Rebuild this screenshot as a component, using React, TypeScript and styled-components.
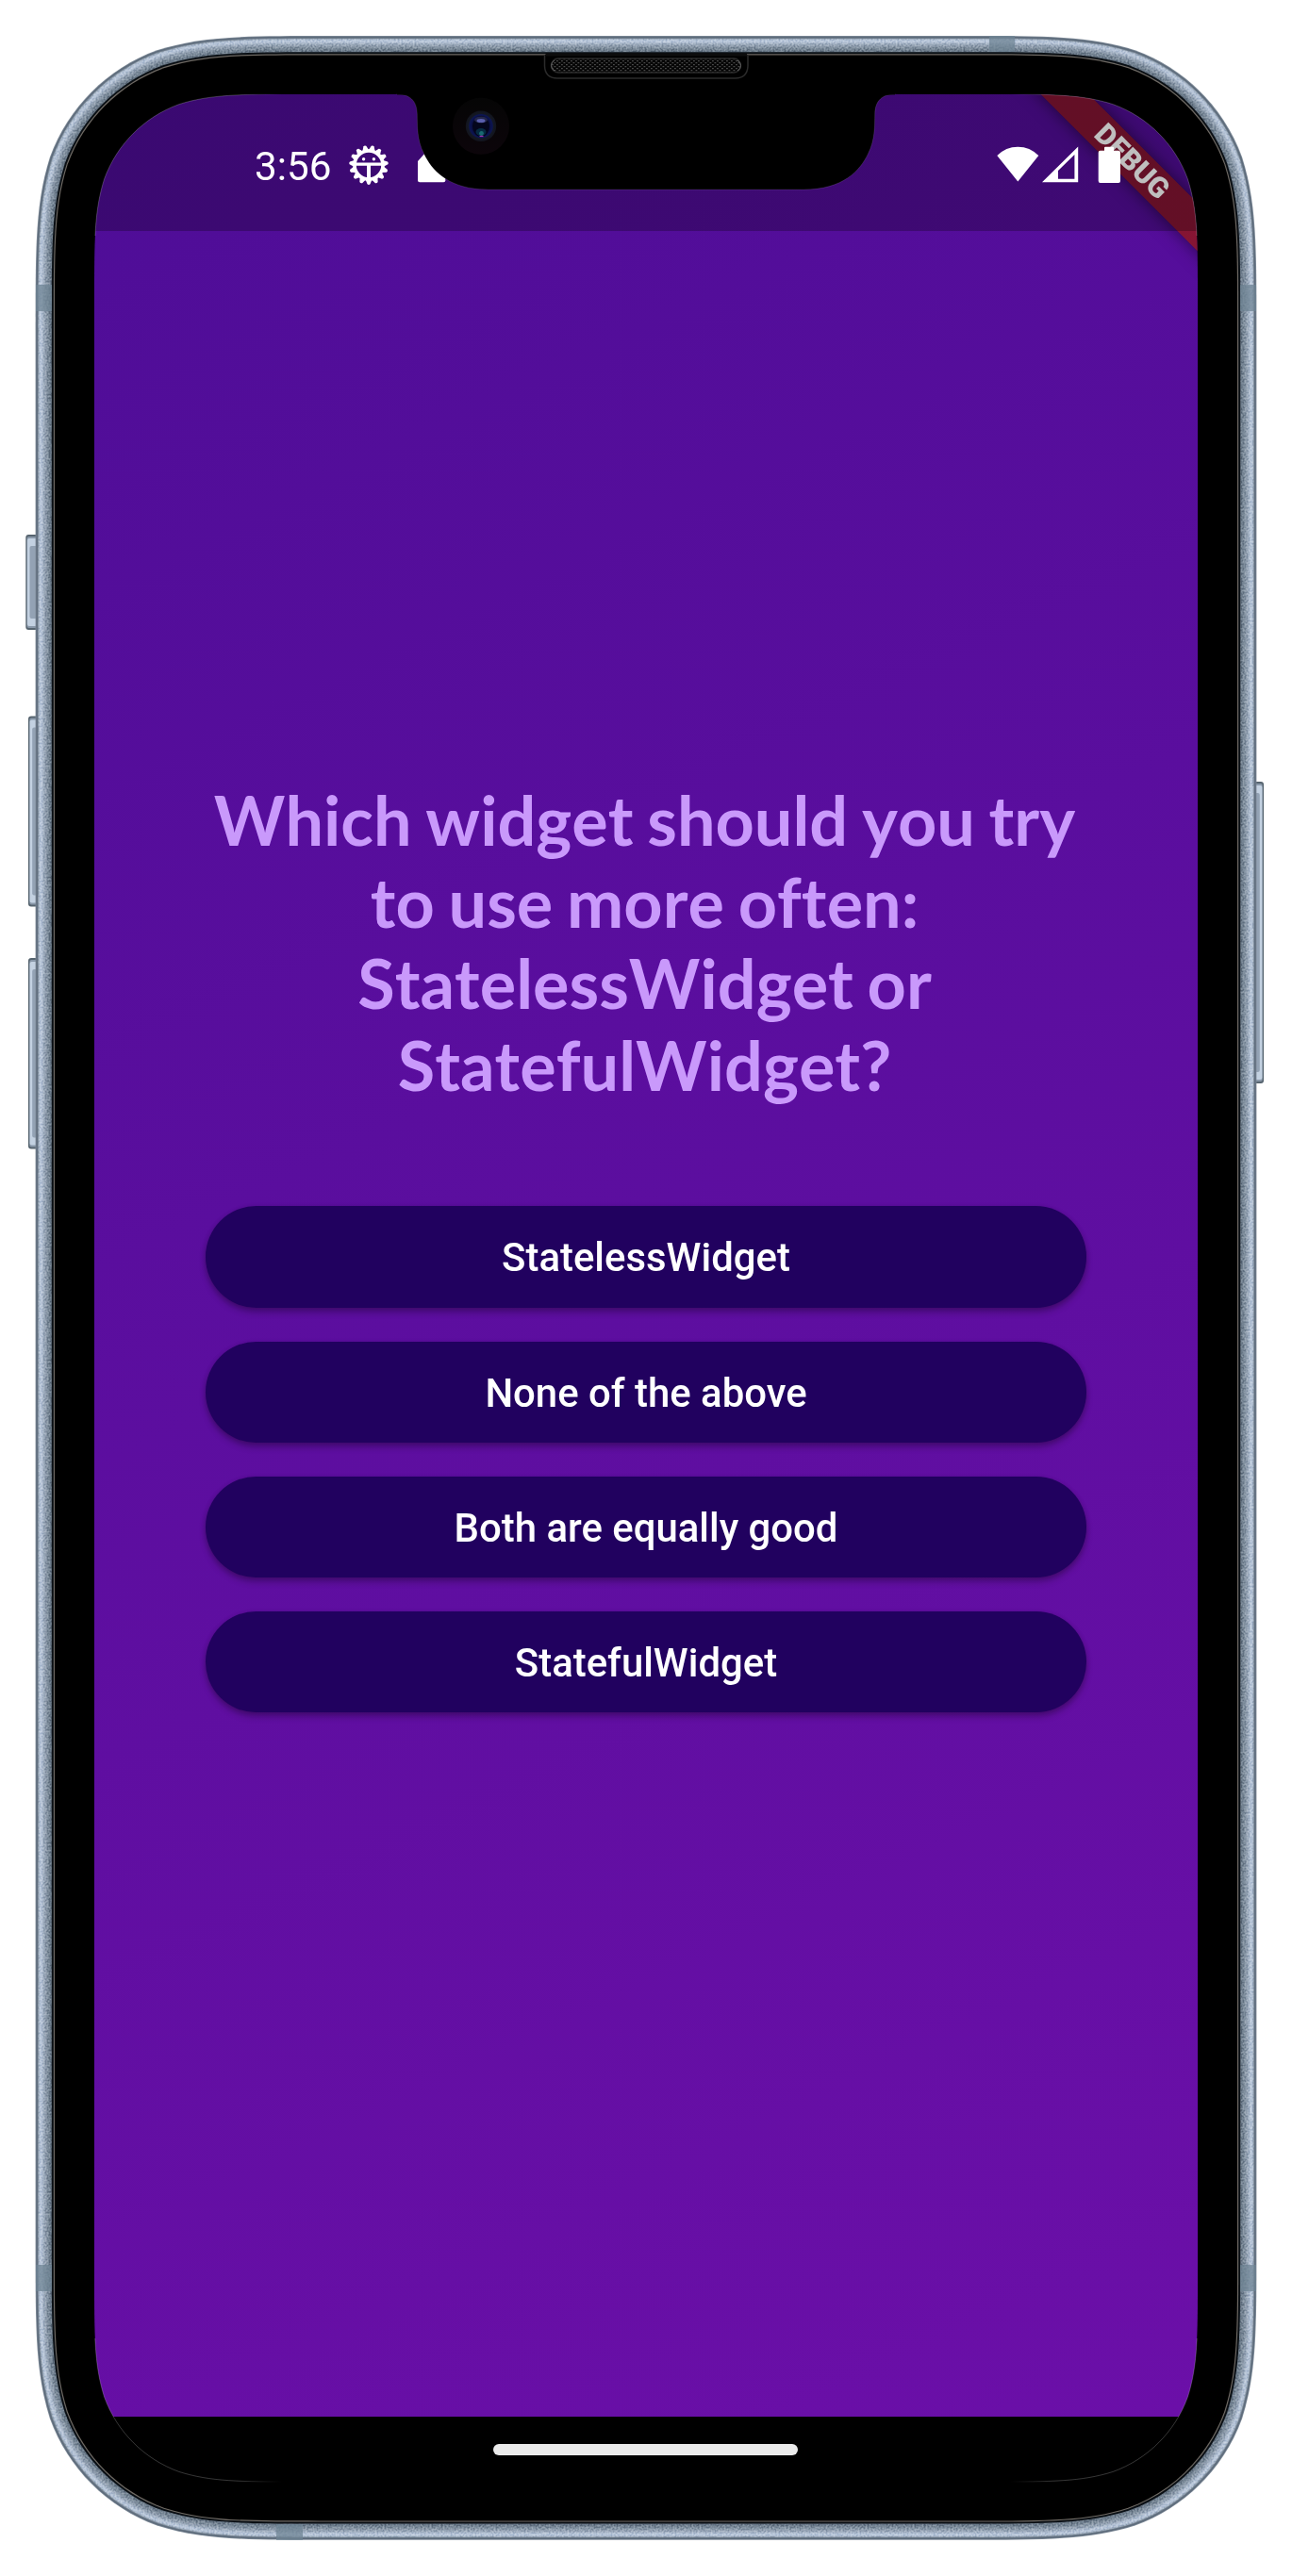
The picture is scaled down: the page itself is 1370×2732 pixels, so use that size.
import React from "react";
import styled, { createGlobalStyle } from "styled-components";

const GlobalStyle = createGlobalStyle`
  * { box-sizing: border-box; }
  body { margin: 0; background: #fff; }
`;

/* Rounded rectangle with continuous-curvature corners. */
const smoothRect = (x: number, y: number, w: number, h: number, r: number): string => {
  const a = 1.528665 * r, b = 1.088493 * r, c = 0.868407 * r;
  const d = 0.631494 * r, e = 0.074911 * r, f = 0.372824 * r, g = 0.16906 * r;
  const R = x + w, B = y + h;
  return [
    `M${x + a} ${y}L${R - a} ${y}`,
    `C${R - b} ${y} ${R - c} ${y} ${R - d} ${y + e}`,
    `C${R - f} ${y + g} ${R - g} ${y + f} ${R - e} ${y + d}`,
    `C${R} ${y + c} ${R} ${y + b} ${R} ${y + a}`,
    `L${R} ${B - a}`,
    `C${R} ${B - b} ${R} ${B - c} ${R - e} ${B - d}`,
    `C${R - g} ${B - f} ${R - f} ${B - g} ${R - d} ${B - e}`,
    `C${R - c} ${B} ${R - b} ${B} ${R - a} ${B}`,
    `L${x + a} ${B}`,
    `C${x + b} ${B} ${x + c} ${B} ${x + d} ${B - e}`,
    `C${x + f} ${B - g} ${x + g} ${B - f} ${x + e} ${B - d}`,
    `C${x} ${B - c} ${x} ${B - b} ${x} ${B - a}`,
    `L${x} ${y + a}`,
    `C${x} ${y + b} ${x} ${y + c} ${x + e} ${y + d}`,
    `C${x + g} ${y + f} ${x + f} ${y + g} ${x + d} ${y + e}`,
    `C${x + c} ${y} ${x + b} ${y} ${x + a} ${y}Z`,
  ].join("");
};

const shellPath = (inset: number): string =>
  smoothRect(37.6 + inset, 38 + inset, 1294.8 - 2 * inset, 2655.8 - 2 * inset, 204 - inset);

/* Metal rim colours, from the outer edge inwards. */
const rim: [number, string][] = [
  [0, "#7f8b98"], [0.8, "#5d6b7b"], [2.2, "#73818f"], [3, "#a3b1c2"], [4, "#b5c3d5"],
  [5, "#bccadc"], [6, "#b9c6d8"], [7, "#afbdcf"], [8, "#a4b2c3"], [9, "#9ba9ba"],
  [10, "#94a2b2"], [11, "#8d9bab"], [12, "#8594a3"], [13, "#7e8d9c"], [14, "#788796"],
  [15, "#728190"], [16, "#6a7988"], [17.2, "#0a0f14"], [19.2, "#6e6963"], [20.4, "#000"],
];

const Stage = styled.main`
  position: relative;
  width: 1370px;
  height: 2732px;
  padding: 100px;
  overflow: hidden;
`;

const Layer = styled.svg`
  position: absolute;
  inset: 0;
  width: 1370px;
  height: 2732px;
  pointer-events: none;
`;

const Grain = styled.g`
  mix-blend-mode: soft-light;
`;

const Screen = styled.section`
  position: relative;
  display: flex;
  flex-direction: column;
  width: 1170px;
  height: 2532px;
  background: #000;
  clip-path: path("${smoothRect(0, 0, 1170, 2532, 142)}");
`;

const AppArea = styled.div`
  position: relative;
  display: flex;
  flex-direction: column;
  height: 2462.7px;
  overflow: hidden;
  background: linear-gradient(154.6deg, rgb(78, 13, 151), rgb(107, 15, 168));
`;

const DebugBanner = styled.div`
  position: absolute;
  top: 51.5px;
  right: -79px;
  width: 300px;
  height: 36px;
  display: flex;
  align-items: center;
  justify-content: center;
  padding-left: 4px;
  transform: rotate(45deg);
  background:
    linear-gradient(rgba(183, 28, 28, 0.627), rgba(183, 28, 28, 0.627)),
    rgba(0, 0, 0, 0.42);
  box-shadow: 0 0 18px rgba(0, 0, 0, 0.5);
  color: #fff;
  font: 900 30.5px/36px Roboto, sans-serif;
`;

const StatusBar = styled.header`
  position: relative;
  display: flex;
  align-items: flex-start;
  height: 145px;
  padding: 50px 80px 0 170px;
  background: rgba(0, 0, 0, 0.25);
  color: #fff;
`;

const Clock = styled.span`
  width: 99.4px;
  padding-top: 2px;
  font: 400 42.2px/50px Roboto, sans-serif;
`;

const StatusGlyph = styled.svg<{ $gap?: number }>`
  flex: none;
  height: 50px;
  margin-left: ${(p) => p.$gap ?? 0}px;
  fill: #fff;
`;

const Spacer = styled.div`
  flex: 1;
`;

const Quiz = styled.div`
  display: flex;
  flex-direction: column;
  padding: 581.4px 118px 0;
`;

const Question = styled.h1`
  margin: 0 -18.5px 107.3px -21.5px;
  color: rgb(201, 153, 251);
  font: 700 72px/86.4px Lato, sans-serif;
  font-kerning: none;
  font-variant-ligatures: none;
  word-spacing: -2.8px;
  text-align: center;
`;

const Answers = styled.div`
  display: flex;
  flex-direction: column;
  gap: 35.8px;
`;

const Answer = styled.button`
  height: 107.4px;
  padding: 2px 0 0;
  border: 0;
  border-radius: 54px;
  background: rgb(33, 1, 95);
  box-shadow: 0 5px 7px rgba(0, 0, 0, 0.24), 0 1px 5px rgba(0, 0, 0, 0.16);
  color: #fff;
  font: 500 41.9px/105.4px Roboto, sans-serif;
`;

const NavBar = styled.footer`
  flex: 1;
  display: flex;
  justify-content: center;
  padding: 29.2px 1.4px 0 0;
`;

const HomeHandle = styled.div`
  width: 323px;
  height: 12.4px;
  border-radius: 7px;
  background: #ebebeb;
`;

const SideKey = ({ x, y, w, h, flip }: { x: number; y: number; w: number; h: number; flip?: boolean }) => (
  <g transform={flip ? `translate(${2 * x + w} 0) scale(-1 1)` : undefined}>
    <rect x={x} y={y} width={w + 6} height={h} rx="3" fill="#56646f" />
    <rect x={x + 1.3} y={y + 2} width={w} height={h - 4} rx="2" fill="#8998a9" />
    <rect x={x + 1.6} y={y + 4} width={w} height={h - 8} rx="2" fill="#c3d1e1" />
    <rect x={x + 4.2} y={y + 12} width={w} height={h - 24} rx="2" fill="#93a2b4" />
  </g>
);

const Shell = () => (
  <Layer viewBox="0 0 1370 2732">
    <defs>
      <filter id="grain" x="0" y="0" width="100%" height="100%" colorInterpolationFilters="sRGB">
        <feTurbulence type="fractalNoise" baseFrequency="0.5" numOctaves="2" seed="4" />
        <feColorMatrix values="2.4 0 0 0 -0.75  2.4 0 0 0 -0.75  2.4 0 0 0 -0.75  0 0 0 0 1" />
      </filter>
      <clipPath id="rimClip">
        <path clipRule="evenodd" d={shellPath(3) + shellPath(17)} />
      </clipPath>
    </defs>
    <SideKey x={27.3} y={567} w={10.5} h={101} />
    <SideKey x={30} y={759.5} w={8} h={202} />
    <SideKey x={30} y={1016} w={8} h={202.5} />
    <SideKey x={1332} y={829} w={8} h={320} flip />
    {rim.map(([inset, color]) => (
      <path key={inset} d={shellPath(inset)} fill={color} />
    ))}
    <Grain clipPath="url(#rimClip)">
      <rect width="1370" height="2732" filter="url(#grain)" opacity="0.45" />
    </Grain>
    <g fill="#6f8494" fillOpacity="0.75">
      <rect x="38" y="302" width="17" height="28" />
      <rect x="1315" y="302" width="17" height="28" />
      <rect x="38" y="2402" width="17" height="28" />
      <rect x="1315" y="2402" width="17" height="28" />
      <rect x="1049" y="38" width="27" height="17" />
      <rect x="293" y="2677" width="28" height="17" />
    </g>
  </Layer>
);

const Notch = () => (
  <Layer viewBox="0 0 1370 2732">
    <defs>
      <pattern id="mesh" width="5" height="4" patternUnits="userSpaceOnUse">
        <rect width="5" height="4" fill="#060606" />
        <path d="M0 0h1.8v1.3H0zM2.5 2h1.8v1.3H2.5z" fill="#4a4a4a" />
      </pattern>
      <radialGradient id="lens">
        <stop offset="0" stopColor="#04051c" />
        <stop offset="0.6" stopColor="#0a0f45" />
        <stop offset="0.75" stopColor="#0c1552" />
        <stop offset="0.82" stopColor="#141823" />
        <stop offset="1" stopColor="#12141d" />
      </radialGradient>
      <linearGradient id="cameraRing" x1="0" y1="0" x2="0" y2="1">
        <stop offset="0" stopColor="#050505" />
        <stop offset="1" stopColor="#0c050a" />
      </linearGradient>
      <linearGradient id="edgeFade" gradientUnits="userSpaceOnUse" x1="100" y1="0" x2="1270" y2="0">
        <stop offset="0" stopColor="#fff" stopOpacity="0.3" />
        <stop offset="0.13" stopColor="#fff" stopOpacity="0.3" />
        <stop offset="0.17" stopColor="#fff" stopOpacity="0" />
        <stop offset="0.83" stopColor="#fff" stopOpacity="0" />
        <stop offset="0.87" stopColor="#fff" stopOpacity="0.3" />
        <stop offset="1" stopColor="#fff" stopOpacity="0.3" />
      </linearGradient>
      <clipPath id="corners">
        <path d="M0 0H1370V250H0ZM0 2480H1370V2732H0Z" />
      </clipPath>
    </defs>
    <path
      d="M421 99V100C434 100 442 106 442.300 121C442.600 134 442 148 449.500 163C458 181 476 201 518 201H852C894 201 912 181 920.500 163C928 148 927.400 134 927.700 121C928 106 936 100 949 100V99Z"
      fill="#000"
      stroke="#fff"
      strokeOpacity="0.18"
      strokeWidth="0.6"
    />
    <path d="M421 90H949V100.400H421Z" fill="#000" />
    <path
      d="M577.500 58V70Q578 83 591 83H779.500Q792.500 83 793 70V58"
      fill="#000"
      stroke="#2b2b2b"
      strokeWidth="1.500"
    />
    <rect x="578.500" y="56.500" width="213.500" height="3" fill="#0d0d0d" />
    <rect x="584.500" y="62" width="201" height="15" rx="7.500" fill="url(#mesh)" stroke="#2a2a2a" strokeWidth="1.300" />
    <path d="M588 64Q584.500 66 584.500 69.500T588 75M782 64Q785.500 66 785.500 69.500T782 75" fill="none" stroke="#666" strokeWidth="1" />
    <circle cx="510" cy="133.700" r="30" fill="url(#cameraRing)" />
    <circle cx="510" cy="133.700" r="16.200" fill="url(#lens)" />
    <ellipse cx="510" cy="134" rx="9" ry="11" fill="#04061c" />
    <ellipse cx="510" cy="127" rx="7" ry="3.500" fill="#23264a" />
    <ellipse cx="510" cy="128" rx="4.500" ry="2" fill="#5a5fae" />
    <ellipse cx="510" cy="140" rx="5.500" ry="4" fill="#062a42" />
    <circle cx="510.500" cy="141.500" r="2.400" fill="#196a70" />
    <path d="M508.500 144.500h4" stroke="#a32fb0" strokeWidth="1.200" />
    <path
      d={smoothRect(100, 100, 1170, 2532, 142)}
      fill="none"
      stroke="url(#edgeFade)"
      strokeWidth="0.700"
      clipPath="url(#corners)"
    />
  </Layer>
);

const GearBug = () => {
  const teeth = Array.from({ length: 15 }, (_, i) => i * 24 + 12);
  return (
    <StatusGlyph width="44" viewBox="-22 -25 44 50">
      {teeth.map((deg) => (
        <path key={deg} d="M-3.600 -15L-1.500 -20.300Q0 -21.600 1.500 -20.300L3.600 -15Z" transform={`rotate(${deg})`} />
      ))}
      <circle r="15" fill="none" stroke="#fff" strokeWidth="3.600" />
      <path d="M-14 -2.500H14V0.800H2V14H-2V0.800H-14Z" />
      <circle cx="-5.400" cy="-6.300" r="1.700" />
      <circle cx="5.400" cy="-6.300" r="1.700" />
    </StatusGlyph>
  );
};

const Status = () => (
  <StatusBar>
    <Clock>3:56</Clock>
    <GearBug />
    <StatusGlyph $gap={29.6} width="34" viewBox="443 150 34 50">
      <path d="M443 171L451 162H472.300V191.300Q472.300 193.300 470.300 193.300H445Q443 193.300 443 191.300Z" />
    </StatusGlyph>
    <Spacer />
    <StatusGlyph width="46" viewBox="1056 150 46 50">
      <path d="M1057.300 165Q1066.500 155.700 1079.300 155.700T1101.300 165L1079.300 192.500Z" />
    </StatusGlyph>
    <StatusGlyph $gap={2} width="40" viewBox="1104 150 40 50">
      <path fillRule="evenodd" d="M1105 193.200L1143.200 155.500V193.200ZM1139.400 164L1122 181V189.700H1139.400Z" />
    </StatusGlyph>
    <StatusGlyph $gap={20} width="26" viewBox="1164 150 26 50">
      <path d="M1171 159.800V156.700Q1171 155.700 1172 155.700H1180Q1181 155.700 1181 156.700V159.800H1186Q1188 159.800 1188 161.800V192Q1188 194 1186 194H1166.700Q1164.700 194 1164.700 192V161.800Q1164.700 159.800 1166.700 159.800Z" />
    </StatusGlyph>
  </StatusBar>
);

const answers = ["StatelessWidget", "None of the above", "Both are equally good", "StatefulWidget"];

export default function App() {
  return (
    <>
      <GlobalStyle />
      <Stage>
        <Shell />
        <Screen>
          <AppArea>
            <DebugBanner>DEBUG</DebugBanner>
            <Status />
            <Quiz>
              <Question>
                Which widget should you try
                <br />
                to use more often:
                <br />
                StatelessWidget or
                <br />
                StatefulWidget?
              </Question>
              <Answers>
                {answers.map((label) => (
                  <Answer key={label}>{label}</Answer>
                ))}
              </Answers>
            </Quiz>
          </AppArea>
          <NavBar>
            <HomeHandle />
          </NavBar>
        </Screen>
        <Notch />
      </Stage>
    </>
  );
}
